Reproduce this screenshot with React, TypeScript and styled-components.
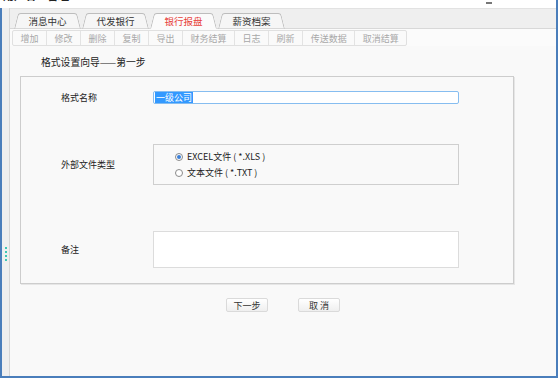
import React from "react";
import styled, { createGlobalStyle } from "styled-components";

const GlobalStyle = createGlobalStyle`
  html, body {
    margin: 0;
    padding: 0;
    background: #ffffff;
  }
  body {
    font-family: "Noto Sans CJK SC", "Noto Sans", sans-serif;
    font-size: 9px;
    color: #333;
  }
`;

const tabs = ["消息中心", "代发银行", "银行报盘", "薪资档案"];
const actions = ["增加", "修改", "删除", "复制", "导出", "财务结算", "日志", "刷新", "传送数据", "取消结算"];

const Page = styled.div`
  width: 558px;
  height: 378px;
  display: flex;
  flex-direction: column;
  overflow: hidden;
`;

const TopStrip = styled.div`
  height: 8px;
  display: flex;
  align-items: flex-start;
  justify-content: space-between;
  border-right: 2px solid #4a7ebb;
  overflow: hidden;
`;

const CutText = styled.div`
  margin: -13px 0 0 3px;
  font-size: 11px;
  line-height: 16px;
  font-weight: bold;
  color: #222;
`;

const Minimize = styled.div`
  width: 6px;
  height: 2px;
  margin: 2px 64px 0 0;
  background: #777;
`;

const Window = styled.div`
  flex: 1;
  display: flex;
  border: 2px solid #4a7ebb;
  border-top: none;
  background: #f9f9f9;
`;

const Sidebar = styled.div`
  width: 7px;
  background: #efefef;
  border-right: 1px solid #d6d6d6;
  display: flex;
  flex-direction: column;
  justify-content: center;
  align-items: center;
  gap: 2px;
  padding-top: 124px;
`;

const Grip = styled.span`
  width: 2px;
  height: 2px;
  background: #3cc6b4;
`;

const Main = styled.div`
  flex: 1;
  display: flex;
  flex-direction: column;
`;

const TabBar = styled.div`
  height: 19px;
  display: flex;
  align-items: flex-end;
  padding-left: 4px;
  background: #efefef;
  border-top: 1px solid #e2e2e2;
  border-bottom: 1px solid #d8d8d8;
`;

const Tab = styled.div<{ $active?: boolean }>`
  position: relative;
  z-index: ${(p) => (p.$active ? 2 : 1)};
  width: 67px;
  height: 16px;
  margin-right: 1px;
  margin-bottom: -1px;
  display: flex;
  align-items: center;
  justify-content: center;
  font-size: 9.5px;
  color: ${(p) => (p.$active ? "#e8403a" : "#333")};

  &::before,
  &::after {
    content: "";
    position: absolute;
    top: 0;
    bottom: 0;
    width: 55%;
    z-index: -1;
    background: ${(p) => (p.$active ? "#fbfbfb" : "#f6f6f6")};
    border: 1px solid #bdbdbd;
    border-bottom: ${(p) => (p.$active ? "1px solid #fbfbfb" : "1px solid #d8d8d8")};
  }
  &::before {
    left: 0;
    border-right: none;
    border-radius: 3px 0 0 0;
    transform-origin: bottom left;
    transform: skewX(-14deg);
  }
  &::after {
    right: 0;
    border-left: none;
    border-radius: 0 3px 0 0;
    transform-origin: bottom right;
    transform: skewX(14deg);
  }
`;

const Toolbar = styled.div`
  display: flex;
  padding: 1px 0 0 2px;
  height: 16px;
  background: #fbfbfb;
`;

const ToolGroup = styled.div`
  display: flex;
  border: 1px solid #e0e0e0;
  border-radius: 2px;
  background: #fafafa;
`;

const ToolButton = styled.div`
  padding: 0 7.5px;
  display: flex;
  align-items: center;
  font-size: 9px;
  color: #a8a8a8;
  & + & {
    border-left: 1px solid #e3e3e3;
  }
`;

const Content = styled.div`
  flex: 1;
  display: flex;
  flex-direction: column;
  padding: 0 40px 0 10px;
`;

const Title = styled.div`
  padding: 9px 0 0 21px;
  height: 21px;
  font-size: 9.8px;
  line-height: 14px;
  color: #222;
`;

const FieldSet = styled.div`
  width: 494px;
  height: 208px;
  border: 1px solid #cdcdcd;
  box-shadow: 1px 1px 0 #e6e6e6;
  display: flex;
  flex-direction: column;
  padding: 14px 0 0 40px;
  box-sizing: border-box;
`;

const FieldRow = styled.div<{ $top?: number }>`
  display: flex;
  align-items: center;
  margin-top: ${(p) => p.$top ?? 0}px;
`;

const Label = styled.div`
  width: 92px;
  font-size: 9px;
  color: #222;
`;

const TextInput = styled.div`
  width: 306px;
  height: 13px;
  box-sizing: border-box;
  border: 1px solid #86bdf0;
  border-radius: 2px;
  background: #fff;
  display: flex;
  align-items: center;
  padding-left: 1px;
`;

const Selected = styled.span`
  background: #3399ff;
  color: #fff;
  font-size: 9px;
  line-height: 11px;
  padding: 0 1px;
`;

const RadioBox = styled.div`
  width: 306px;
  height: 41px;
  box-sizing: border-box;
  border: 1px solid #cfcfcf;
  display: flex;
  flex-direction: column;
  justify-content: center;
  gap: 4px;
  padding-left: 21px;
`;

const RadioItem = styled.label`
  display: flex;
  align-items: center;
  gap: 4px;
  font-size: 9px;
  line-height: 12px;
  color: #222;
`;

const RadioDot = styled.span<{ $checked?: boolean }>`
  width: 8px;
  height: 8px;
  box-sizing: border-box;
  border-radius: 50%;
  border: 1px solid #8a8a8a;
  background: #fff;
  display: flex;
  align-items: center;
  justify-content: center;
  &::after {
    content: "";
    width: 4px;
    height: 4px;
    border-radius: 50%;
    background: ${(p) => (p.$checked ? "#3c7fd6" : "transparent")};
  }
`;

const Note = styled.div`
  width: 306px;
  height: 37px;
  box-sizing: border-box;
  border: 1px solid #dcdcdc;
  background: #fff;
`;

const Actions = styled.div`
  display: flex;
  justify-content: center;
  gap: 30px;
  margin-top: 14px;
  padding-left: 30px;
`;

const Button = styled.div`
  width: 42px;
  height: 14px;
  box-sizing: border-box;
  border: 1px solid #dadada;
  border-radius: 2px;
  background: linear-gradient(#ffffff, #efefef);
  display: flex;
  align-items: center;
  justify-content: center;
  font-size: 9px;
  color: #333;
`;

const App = () => {
  return (
    <Page>
      <GlobalStyle />
      <TopStrip>
        <CutText>用户名：管理</CutText>
        <Minimize />
      </TopStrip>
      <Window>
        <Sidebar>
          <Grip />
          <Grip />
          <Grip />
          <Grip />
        </Sidebar>
        <Main>
          <TabBar>
            {tabs.map((t) => (
              <Tab key={t} $active={t === "银行报盘"}>
                {t}
              </Tab>
            ))}
          </TabBar>
          <Toolbar>
            <ToolGroup>
              {actions.map((a) => (
                <ToolButton key={a}>{a}</ToolButton>
              ))}
            </ToolGroup>
          </Toolbar>
          <Content>
            <Title>格式设置向导——第一步</Title>
            <FieldSet>
              <FieldRow>
                <Label>格式名称</Label>
                <TextInput>
                  <Selected>一级公司</Selected>
                </TextInput>
              </FieldRow>
              <FieldRow $top={40}>
                <Label>外部文件类型</Label>
                <RadioBox>
                  <RadioItem>
                    <RadioDot $checked />
                    EXCEL文件 ( *.XLS )
                  </RadioItem>
                  <RadioItem>
                    <RadioDot />
                    文本文件 ( *.TXT )
                  </RadioItem>
                </RadioBox>
              </FieldRow>
              <FieldRow $top={46}>
                <Label>备注</Label>
                <Note />
              </FieldRow>
            </FieldSet>
            <Actions>
              <Button>下一步</Button>
              <Button>取 消</Button>
            </Actions>
          </Content>
        </Main>
      </Window>
    </Page>
  );
};

export default App;
